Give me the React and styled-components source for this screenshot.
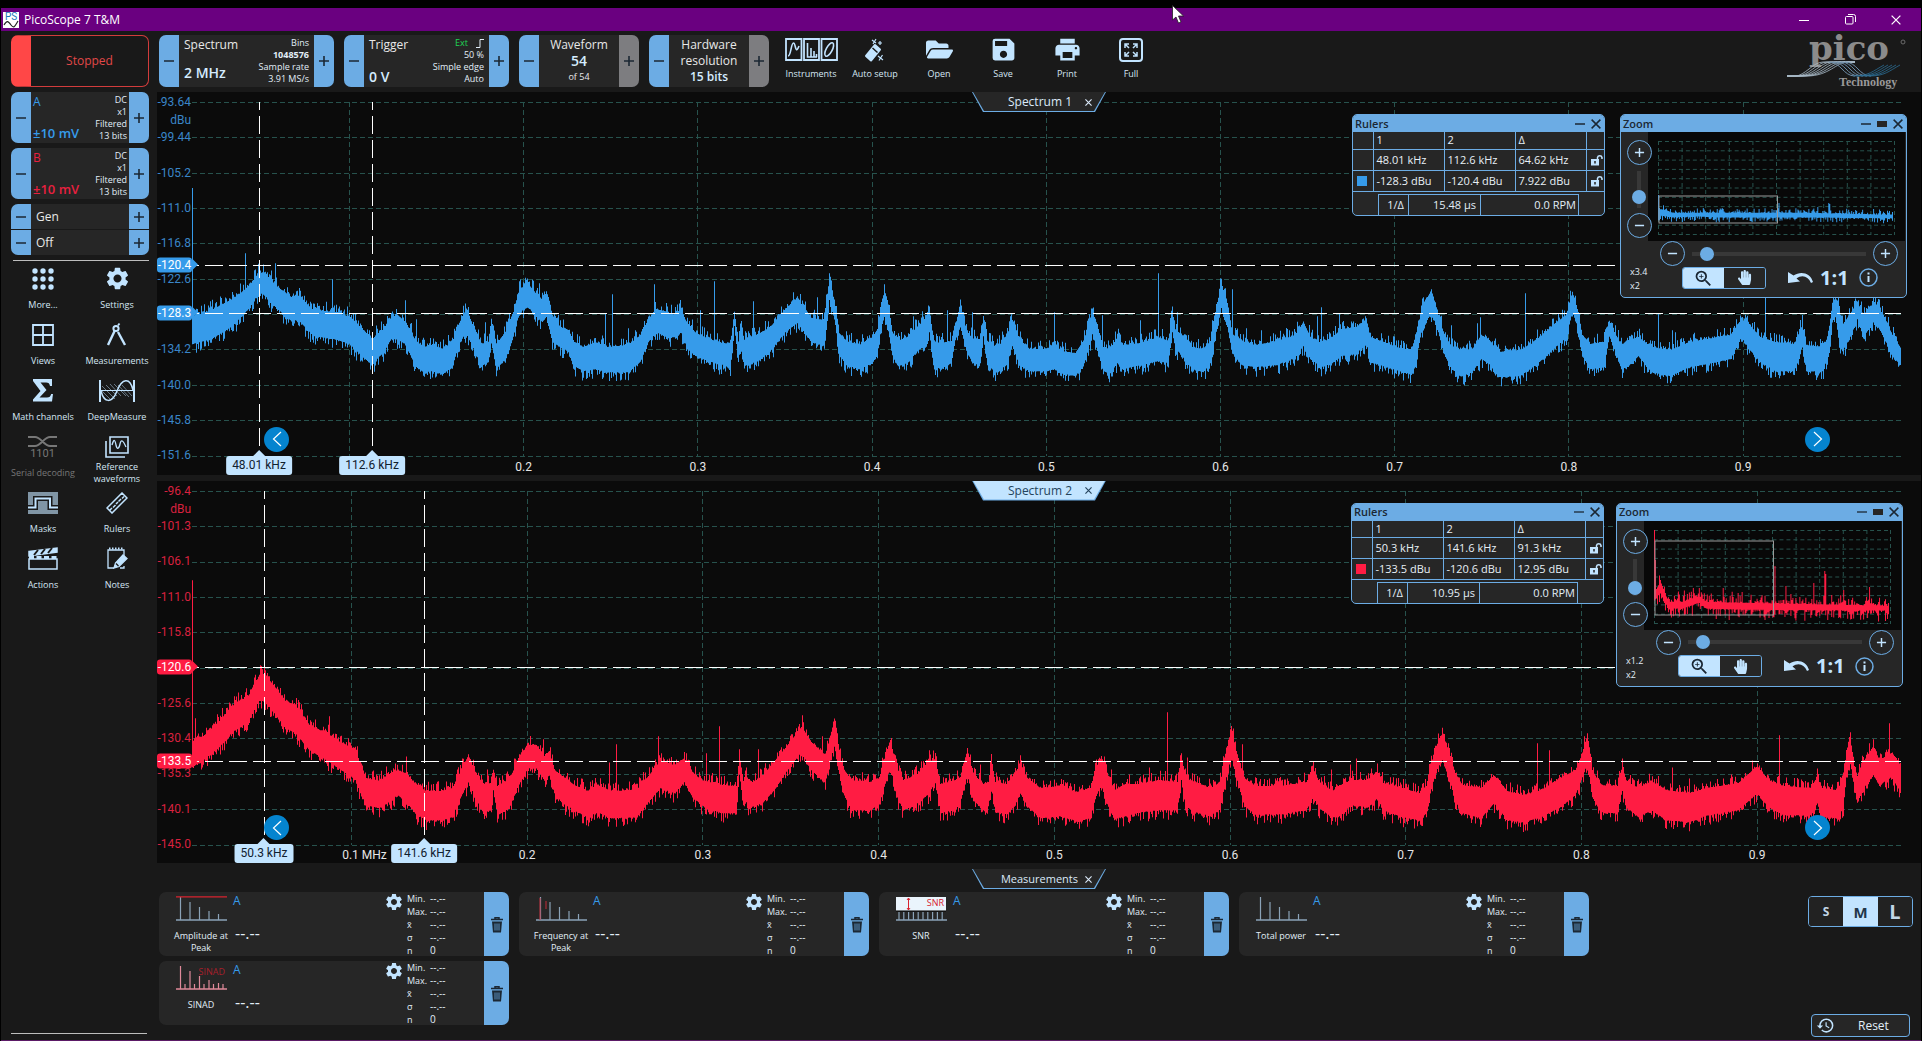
import React from "react";
import styled, { createGlobalStyle, css } from "styled-components";
import { MdSettings, MdHistory, MdZoomIn, MdPrint, MdSave } from "react-icons/md";
import { FaFolderOpen, FaHandPaper } from "react-icons/fa";

const C = {
  bg: "#191919",
  panel: "#262626",
  plot: "#0b0b0b",
  accent: "#6cace4",
  pale: "#c2e4ff",
  text: "#e2eef8",
  grid: "#27524d",
  blue: "#369bea",
  red: "#ff1c43",
  ink: "#1b2733",
};
const UI = `"Segoe UI", "Open Sans", "Noto Sans", sans-serif`;
const NUM = `Roboto, "Liberation Sans", sans-serif`;

const Global = createGlobalStyle`
  * { box-sizing: border-box; }
  body { margin: 0; background: #000; color: ${C.text}; font: 12px/16px ${UI}; }
  button { font: inherit; color: inherit; border: 0; padding: 0; background: none; cursor: pointer; }
  svg { display: block; }
`;

/* ---------- window frame ---------- */

const Window = styled.div`
  display: flex;
  flex-direction: column;
  min-height: 100vh;
  padding-top: 8px;
  border: 1px solid #000;
  border-width: 0 1px;
  box-shadow: inset 0 -1px 0 #5b1a66;
`;
const TitleBar = styled.header`
  display: flex;
  align-items: center;
  gap: 5px;
  height: 23px;
  padding: 0 2px;
  background: #6a0080;
  color: #fff;
  font-size: 12px;
`;
const Caption = styled.h1`
  margin: 0;
  flex: 1;
  font: inherit;
`;
const FrameButtons = styled.div`
  display: flex;
`;
const FrameButton = styled.button`
  display: grid;
  place-items: center;
  width: 46px;
  height: 20px;
`;
const Pointer = styled.svg`
  position: absolute;
  top: 5px;
  left: 61%;
  z-index: 10;
`;
const Body = styled.div`
  flex: 1;
  display: grid;
  grid-template-columns: 156px minmax(0, 1fr);
  margin-bottom: 1px;
  background: ${C.bg};
`;
const Main = styled.main`
  display: flex;
  flex-direction: column;
  min-width: 0;
`;

/* ---------- stepper controls ---------- */

const Stepper = styled.section`
  display: flex;
  flex: none;
  width: ${(p) => p.$w || "100%"};
  height: ${(p) => p.$h || 52}px;
  border-radius: 7px;
  overflow: hidden;
  background: ${C.panel};
`;
const StepButton = styled.button`
  flex: none;
  display: grid;
  place-items: center;
  width: 20px;
  background: ${(p) => (p.disabled ? "#7d7d80" : C.accent)};
  color: ${C.ink};
`;
const Pair = styled.div`
  flex: 1;
  display: flex;
  justify-content: space-between;
  padding: 0 ${(p) => p.$pad || 5}px;
  min-width: 0;
`;
const Lead = styled.div`
  display: flex;
  flex-direction: column;
  justify-content: space-between;
  padding: 2px 0 ${(p) => (p.$tight ? 6 : 2)}px;
  color: ${(p) => p.$color || "#e8e8e8"};
  font-size: 12px;
`;
const Value = styled.strong`
  font-size: ${(p) => p.$size || 13}px;
  font-weight: 600;
  color: ${(p) => p.$color || "#d5ecff"};
`;
const Details = styled.div`
  display: flex;
  flex-direction: column;
  justify-content: center;
  text-align: right;
  font-size: 9px;
  line-height: 12px;
  color: ${C.text};
`;
const Edge = styled.span`
  display: flex;
  justify-content: flex-end;
  align-items: center;
  gap: 8px;
  color: #1fd655;
`;
const Stack = styled.div`
  flex: 1;
  display: flex;
  flex-direction: column;
  align-items: center;
  justify-content: center;
  text-align: center;
  line-height: 16px;
  color: #e8e8e8;
`;
const Small = styled.span`
  font-size: 9px;
`;

function Sign({ plus, size = 12 }) {
  return (
    <svg width={size} height={size} viewBox="0 0 12 12" stroke="currentColor" strokeWidth="1.6" aria-hidden="true">
      <path d={plus ? "M1 6H11M6 1V11" : "M1 6H11"} />
    </svg>
  );
}

function Step({ name, w, h, plusOff, children }) {
  return (
    <Stepper $w={w} $h={h}>
      <StepButton aria-label={`${name} down`}><Sign /></StepButton>
      {children}
      <StepButton aria-label={`${name} up`} disabled={plusOff}><Sign plus /></StepButton>
    </Stepper>
  );
}

/* ---------- sidebar ---------- */

const Sidebar = styled.aside`
  display: flex;
  flex-direction: column;
  padding: 4px 0 6px;
`;
const Channels = styled.div`
  display: flex;
  flex-direction: column;
  gap: 5px;
  padding: 0 8px 0 10px;
`;
const RunButton = styled.button`
  height: 52px;
  border: 1px solid #d23c3c;
  border-left: 20px solid #ff4747;
  border-radius: 7px;
  color: #e14848;
  font-size: 12px;
  background: ${C.bg};
`;
const Generator = styled.div`
  display: flex;
  flex-direction: column;
  gap: 1px;
  border-radius: 7px;
  overflow: hidden;

  & > section { border-radius: 0; }
`;
const GenLabel = styled.span`
  flex: 1;
  padding-left: 5px;
  line-height: 25px;
  color: #e8e8e8;
`;
const Rule = styled.hr`
  width: 136px;
  margin: ${(p) => (p.$foot ? "auto 0 0 10px" : "5px 0 3px 12px")};
  border: 0;
  border-top: 1px solid #bdbdbd;
`;
const ToolGrid = styled.nav`
  display: grid;
  grid-template-columns: 74px 74px;
  grid-auto-rows: 56px;
  padding-left: 5px;
`;
const Tool = styled.button`
  display: flex;
  flex-direction: column;
  align-items: center;
  width: ${(p) => (p.$bar ? "64px" : "auto")};
  color: ${(p) => (p.disabled ? "#777" : C.pale)};
`;
const ToolIcon = styled.span`
  display: grid;
  place-items: center;
  height: 29px;
`;
const ToolLabel = styled.span`
  display: grid;
  place-items: center;
  height: ${(p) => (p.$bar ? 20 : 24)}px;
  font-size: 9px;
  line-height: 12px;
  color: ${(p) => (p.$off ? "#777" : "#d5e6f4")};
`;

function ToolItem({ label, icon, disabled, bar }) {
  return (
    <Tool disabled={disabled} $bar={bar}>
      <ToolIcon>{icon}</ToolIcon>
      <ToolLabel $off={disabled} $bar={bar}>{label}</ToolLabel>
    </Tool>
  );
}

const Line = (props) => <svg fill="none" stroke="currentColor" aria-hidden="true" {...props} />;

const DotsIcon = () => (
  <svg width="22" height="22" viewBox="0 0 22 22" fill="currentColor" aria-hidden="true">
    {[3, 11, 19].map((y) => [3, 11, 19].map((x) => <circle key={`${x}${y}`} cx={x} cy={y} r="2.7" />))}
  </svg>
);
const ViewsIcon = () => (
  <Line width="22" height="22" strokeWidth="1.8"><path d="M1 1H21V21H1ZM11 1V21M1 11H21" /></Line>
);
const CompassIcon = () => (
  <Line width="22" height="24" strokeWidth="2.4">
    <circle cx="10" cy="5.5" r="2.6" strokeWidth="2" />
    <path d="M12 2.5L13.5 .5" strokeWidth="1.8" />
    <path d="M8.6 8L2 22M12 9L19 22" />
  </Line>
);
const SigmaIcon = () => (
  <svg width="20" height="23" viewBox="0 0 20 23" fill="currentColor" aria-hidden="true">
    <path d="M0 0H19V7H17C16.600 4.500 15.500 3.500 13 3.500H7.500L13.500 11L6.500 18.500H14C16.500 18.500 17.500 17.500 18.200 15H20L19 22.500H0V20.500L7.500 12L0 2Z" />
  </svg>
);
const DeepIcon = () => (
  <Line width="36" height="24" strokeWidth="1.5">
    <path d="M1 1V23M35 1V23" strokeWidth="2" />
    <path d="M1 11.500H35" strokeWidth="1.200" />
    <path d="M2 12C5 24 13 25 18 12S31 -2 34 11" />
    <path d="M3 7L16 20M7 6L18 17M11 5L22 17M15 5L27 17M19 6L30 18M23 6L33 17M3 12L12 21" strokeWidth=".8" opacity=".6" />
  </Line>
);
const SerialIcon = () => (
  <svg width="30" height="26" aria-hidden="true">
    <path d="M0 3H7C13 3 16 12 22 12H29M0 12H7C13 12 16 3 22 3H29" fill="none" stroke="currentColor" strokeWidth="2" />
    <text x="14.500" y="23" textAnchor="middle" fontFamily={NUM} fontSize="11" fill="currentColor">1101</text>
  </svg>
);
const ReferenceIcon = () => (
  <Line width="24" height="22" strokeWidth="1.600">
    <path d="M5 1H23V17H5ZM1 5V21H20" />
    <path d="M7 9C9 2 10 4 11 9S14 13 15 8S18 4 21 11" strokeWidth="1.300" />
  </Line>
);
const MasksIcon = () => (
  <svg width="30" height="22" aria-hidden="true">
    <rect width="30" height="22" fill="#8095a5" />
    <path d="M0 15.500H7.500V6.500H22V15.500H30" fill="none" stroke="#191919" strokeWidth="5" />
    <path d="M0 15.500H7.500V6.500H22V15.500H30" fill="none" stroke={C.pale} strokeWidth="2" />
  </svg>
);
const RulerIcon = () => (
  <Line width="22" height="22" strokeWidth="1.500">
    <path d="M1 16L16 1L21 6L6 21ZM4 18L6 16M7 15.500L9.500 13M10 12L12 10M12.500 9.500L15 7M16 6.500L18 4.500" />
  </Line>
);
const ActionsIcon = () => (
  <Line width="30" height="23" strokeWidth="1.500">
    <path d="M1 12H29V22H1Z" />
    <path d="M1 4.500L29 1V5L1 9Z" fill="currentColor" />
    <path d="M6 8L10 3M13 7L17 2M20 6L24 1" stroke="#191919" strokeWidth="2" />
    <path d="M1 10.500H29" strokeWidth="3" strokeDasharray="5 2.500" />
  </Line>
);
const NotesIcon = () => (
  <Line width="22" height="24" strokeWidth="1.300">
    <path d="M18 11V3H2V21H8M18 19V21H14" />
    <path d="M3 1.500H18" strokeWidth="2" strokeDasharray="1.500 1.500" />
    <path d="M8 21L9.500 16L17 8L21 11.500L13 19.500Z" fill="currentColor" />
    <path d="M10 16.500L12.500 19" stroke="#191919" />
  </Line>
);

const TOOLS = [
  ["More...", <DotsIcon />],
  ["Settings", <MdSettings size={27} />],
  ["Views", <ViewsIcon />],
  ["Measurements", <CompassIcon />],
  ["Math channels", <SigmaIcon />],
  ["DeepMeasure", <DeepIcon />],
  ["Serial decoding", <SerialIcon />, true],
  ["Reference waveforms", <ReferenceIcon />],
  ["Masks", <MasksIcon />],
  ["Rulers", <RulerIcon />],
  ["Actions", <ActionsIcon />],
  ["Notes", <NotesIcon />],
];

function Channel({ id, color }) {
  return (
    <Step name={`Channel ${id} range`} h={51}>
      <Pair $pad={2}>
        <Lead $color={color}>
          <span>{id}</span>
          <Value $color={color}>±10 mV</Value>
        </Lead>
        <Details><span>DC</span><span>x1</span><span>Filtered</span><span>13 bits</span></Details>
      </Pair>
    </Step>
  );
}

/* ---------- toolbar ---------- */

const Toolbar = styled.div`
  display: flex;
  gap: 10px;
  height: 61px;
  padding: 4px 14px 0 2px;
`;
const ToolRow = styled.div`
  display: flex;
`;
const LogoBox = styled.svg`
  margin-left: auto;
  overflow: visible;
`;

const InstrumentsIcon = () => (
  <Line width="53" height="23" strokeWidth="1.800">
    <path d="M1 1H16.500V22H1ZM19 1H34V22H19ZM36.500 1H52V22H36.500Z" />
    <path d="M3 18C6 18 6 5 8.500 5S10 18 14 8" strokeWidth="1.600" />
    <path d="M22.500 5V19H32M26 10V19M29 13V19M31.500 16V19" strokeWidth="1.600" />
    <ellipse cx="44.200" cy="11.500" rx="3" ry="7.500" transform="rotate(28 44.200 11.500)" strokeWidth="1.600" />
  </Line>
);
const WandIcon = () => (
  <svg width="22" height="24" viewBox="0 0 22 24" aria-hidden="true">
    <path d="M2 18L11 7L16 11.500L7 22.500Z" fill="currentColor" stroke="currentColor" strokeWidth="2" strokeLinejoin="round" />
    <path d="M8.500 10L13.500 14.500" stroke="#191919" strokeWidth="1.500" />
    <path d="M8 2L12 5M12 1L9 6M16 3V7M14 5H18M14 18L19 22M18.500 17L15 22.500" stroke="currentColor" strokeWidth="1.200" />
  </svg>
);
const FullIcon = () => (
  <Line width="24" height="24" strokeWidth="2">
    <rect x="1" y="1" width="22" height="22" rx="3" />
    <path d="M6 10V6H10M14 6H18V10M18 14V18H14M10 18H6V14M6 6L10 10M18 6L14 10M18 18L14 14M6 18L10 14" strokeWidth="1.500" />
  </Line>
);

function Logo() {
  return (
    <LogoBox width="120" height="56" role="img" aria-label="pico Technology">
      <text x="62" y="25" textAnchor="middle" fontFamily={`"DejaVu Serif", serif`} fontSize="34" fontWeight="700" fill="#8b8b8b">pico</text>
      <circle cx="116" cy="7" r="2" fill="none" stroke="#6a6a6a" />
      <g fill="none" strokeWidth="1">
        {[0, 4, 8, 12, 16, 20, 24].map((d) => (
          <path key={`a${d}`} d={`M0 41H${8 + d / 2}C${18 + d} 41 ${26 + d} 27 ${36 + d} 27H68`} stroke="#a9bac8" opacity=".8" />
        ))}
        {[0, 4, 8, 12, 16].map((d) => (
          <path key={`b${d}`} d={`M${42 + d} 27C${54 + d} 27 ${56 + d} 41 ${68 + d} 41`} stroke="#6e8ca6" />
        ))}
        {[0, 4, 8, 12, 16].map((d) => (
          <path key={`c${d}`} d={`M${66 + d} 41C${82 + d} 41 ${86 + d} 36 ${97 + d} 30`} stroke="#2b6d94" opacity=".8" />
        ))}
      </g>
      <text x="52" y="51" fontFamily={`"Liberation Serif", serif`} fontWeight="700" fontSize="12" fill="#9a9a9a">Technology</text>
    </LogoBox>
  );
}

/* ---------- spectrum data: [x, upper edge, lower edge] of the noise band ---------- */

const BAND_A = [
  [0, 213, 243], [19, 206, 238], [40, 195, 225], [56, 183, 208], [67, 168, 191], [74, 171, 196], [85, 183, 208],
  [99, 193, 220], [105, 191, 218], [121, 206, 235], [142, 208, 238], [158, 213, 243], [170, 225, 256], [180, 235, 263],
  [191, 225, 251], [199, 213, 238], [205, 211, 238], [213, 218, 243], [223, 236, 265], [231, 243, 271], [240, 241, 270],
  [250, 245, 273], [260, 238, 266], [266, 221, 245], [274, 205, 230], [280, 220, 245], [289, 240, 265], [296, 238, 261],
  [299, 216, 241], [304, 240, 268], [313, 228, 258], [321, 208, 235], [327, 185, 211], [336, 180, 206], [344, 190, 216],
  [350, 196, 221], [354, 191, 216], [360, 211, 241], [368, 223, 246], [376, 226, 250], [382, 238, 265], [391, 243, 270],
  [403, 238, 268], [415, 243, 271], [436, 241, 271], [448, 231, 260], [456, 215, 241], [464, 205, 231], [474, 208, 236],
  [482, 211, 236], [489, 205, 231], [495, 221, 248], [505, 230, 256], [525, 238, 263], [538, 240, 265], [542, 208, 225],
  [546, 238, 260], [548, 220, 245], [552, 236, 265], [566, 230, 260], [578, 223, 250], [593, 205, 231], [605, 194, 222],
  [611, 203, 230], [619, 214, 241], [632, 216, 245], [637, 174, 199], [643, 203, 222], [646, 228, 252], [654, 237, 264],
  [667, 241, 268], [680, 233, 262], [685, 226, 254], [689, 199, 226], [692, 189, 216], [696, 201, 230], [700, 228, 254],
  [706, 237, 265], [715, 233, 262], [726, 222, 249], [733, 214, 245], [737, 203, 231], [741, 237, 264], [748, 239, 268],
  [759, 237, 262], [763, 222, 239], [768, 199, 226], [774, 226, 249], [780, 235, 262], [788, 235, 262], [791, 212, 235],
  [795, 237, 264], [805, 244, 272], [815, 230, 262], [820, 216, 245], [827, 235, 264], [837, 245, 270], [855, 245, 270],
  [862, 239, 268], [868, 247, 272], [883, 249, 275], [892, 235, 262], [900, 207, 233], [905, 222, 249], [911, 243, 270],
  [918, 245, 272], [925, 233, 262], [931, 241, 268], [948, 239, 264], [966, 233, 260], [976, 237, 262], [980, 207, 231],
  [983, 226, 247], [989, 230, 254], [1000, 243, 268], [1011, 245, 271], [1018, 237, 262], [1024, 203, 230],
  [1029, 180, 207], [1035, 199, 226], [1040, 230, 252], [1050, 237, 264], [1063, 241, 266], [1085, 237, 264],
  [1103, 231, 256], [1111, 218, 245], [1118, 233, 258], [1129, 239, 266], [1140, 233, 262], [1149, 225, 255],
  [1164, 223, 253], [1174, 215, 241], [1178, 233, 261], [1191, 238, 265], [1210, 245, 271], [1219, 245, 273],
  [1224, 231, 258], [1229, 205, 231], [1239, 186, 211], [1246, 211, 231], [1251, 228, 251], [1259, 243, 268],
  [1270, 246, 275], [1280, 245, 271], [1289, 231, 258], [1297, 236, 263], [1306, 248, 276], [1327, 246, 275],
  [1338, 241, 268], [1353, 228, 256], [1364, 218, 245], [1374, 211, 236], [1380, 188, 211], [1385, 205, 225],
  [1390, 231, 255], [1398, 240, 268], [1412, 238, 266], [1417, 218, 235], [1422, 228, 248], [1429, 241, 268],
  [1436, 236, 265], [1446, 233, 255], [1459, 243, 271], [1478, 246, 275], [1497, 238, 266], [1515, 235, 263],
  [1538, 231, 258], [1549, 215, 236], [1557, 221, 248], [1568, 233, 261], [1583, 238, 270], [1602, 240, 270],
  [1607, 228, 255], [1610, 221, 245], [1614, 241, 270], [1631, 243, 270], [1636, 231, 251], [1640, 201, 221],
  [1643, 193, 215], [1646, 201, 235], [1650, 221, 250], [1657, 211, 238], [1665, 198, 218], [1671, 211, 236],
  [1682, 198, 220], [1691, 211, 235], [1700, 231, 255], [1709, 245, 265],
];
const SPIKES_A = [
  [0, 86], [18, 199], [53, 151], [83, 161], [140, 177], [213, 198], [224, 217], [293, 220], [347, 181], [413, 211],
  [420, 192], [436, 226], [462, 182], [508, 208], [522, 179], [561, 199], [625, 195], [721, 214], [730, 209], [755, 208],
  [780, 210], [862, 210], [910, 213], [948, 218], [966, 171], [985, 210], [1040, 187], [1054, 226], [1069, 228],
  [1125, 214], [1129, 205], [1147, 211], [1259, 223], [1285, 221], [1288, 215], [1333, 191], [1423, 223], [1466, 211],
  [1480, 228], [1483, 230], [1573, 188],
];
const BAND_B = [
  [0, 250, 277], [11, 243, 270], [27, 228, 257], [40, 213, 242], [56, 203, 232], [62, 193, 220], [67, 182, 210],
  [73, 182, 212], [85, 197, 227], [93, 208, 238], [103, 212, 243], [117, 232, 260], [134, 240, 270], [146, 248, 278],
  [164, 257, 290], [168, 273, 303], [174, 285, 315], [187, 288, 318], [195, 282, 313], [205, 277, 305], [213, 280, 310],
  [225, 293, 325], [234, 298, 330], [248, 298, 330], [260, 295, 327], [266, 283, 312], [276, 262, 292], [282, 277, 305],
  [291, 292, 323], [298, 292, 320], [301, 277, 300], [305, 293, 325], [317, 287, 318], [327, 263, 292], [336, 252, 278],
  [344, 252, 278], [352, 263, 290], [357, 258, 285], [362, 277, 303], [370, 283, 313], [382, 292, 320], [395, 298, 327],
  [405, 292, 322], [419, 298, 328], [444, 297, 327], [456, 283, 312], [468, 268, 298], [482, 272, 303], [492, 265, 292],
  [499, 278, 305], [509, 287, 315], [529, 292, 323], [544, 293, 323], [547, 263, 283], [551, 288, 315], [554, 280, 312],
  [556, 292, 318], [570, 283, 313], [582, 268, 300], [593, 255, 283], [609, 234, 262], [619, 249, 280], [633, 262, 293],
  [637, 247, 274], [642, 226, 255], [646, 251, 278], [650, 274, 301], [659, 287, 320], [678, 289, 320], [687, 285, 314],
  [693, 262, 293], [698, 247, 276], [704, 274, 305], [711, 287, 320], [724, 282, 314], [737, 268, 303], [743, 266, 291],
  [748, 291, 322], [763, 287, 320], [768, 284, 312], [775, 257, 285], [781, 282, 310], [791, 291, 320], [796, 289, 316],
  [799, 268, 297], [803, 289, 322], [815, 291, 324], [822, 280, 316], [828, 272, 303], [835, 285, 316], [848, 295, 328],
  [867, 293, 326], [885, 299, 331], [898, 295, 328], [904, 274, 305], [909, 264, 295], [914, 278, 312], [922, 297, 329],
  [933, 291, 326], [948, 291, 322], [966, 287, 320], [985, 289, 320], [989, 262, 289], [993, 285, 316], [1003, 289, 322],
  [1018, 295, 326], [1028, 289, 318], [1033, 262, 291], [1039, 236, 266], [1044, 259, 287], [1052, 285, 316],
  [1063, 293, 324], [1088, 293, 324], [1114, 289, 320], [1121, 276, 307], [1127, 289, 318], [1140, 298, 327],
  [1146, 293, 327], [1159, 287, 315], [1176, 287, 317], [1185, 278, 308], [1191, 290, 320], [1210, 295, 327],
  [1227, 300, 330], [1234, 293, 323], [1238, 273, 303], [1244, 253, 280], [1250, 240, 270], [1257, 260, 287],
  [1263, 280, 310], [1270, 292, 323], [1289, 295, 328], [1297, 287, 318], [1302, 283, 313], [1315, 298, 330],
  [1331, 302, 332], [1349, 297, 327], [1368, 285, 317], [1383, 277, 305], [1389, 263, 290], [1395, 242, 273],
  [1400, 277, 307], [1408, 292, 322], [1425, 293, 323], [1430, 273, 300], [1434, 288, 317], [1446, 295, 327],
  [1459, 288, 320], [1474, 297, 330], [1497, 300, 332], [1515, 295, 325], [1546, 290, 320], [1557, 280, 310],
  [1565, 273, 303], [1576, 287, 317], [1591, 293, 325], [1619, 295, 325], [1625, 283, 313], [1629, 295, 327],
  [1644, 297, 328], [1651, 287, 317], [1654, 257, 287], [1658, 247, 273], [1662, 273, 297], [1665, 283, 312],
  [1672, 267, 297], [1681, 253, 285], [1687, 267, 295], [1699, 260, 287], [1704, 265, 295], [1709, 280, 303],
];
const SPIKES_B = [
  [0, 89], [3, 227], [42, 205], [54, 197], [68, 174], [137, 225], [214, 265], [295, 278], [351, 248], [417, 271],
  [424, 253], [466, 245], [514, 262], [527, 235], [566, 258], [610, 224], [630, 245], [737, 259], [788, 273],
  [919, 278], [957, 276], [975, 221], [995, 266], [1050, 253], [1139, 278], [1158, 273], [1164, 267], [1345, 252],
  [1357, 259], [1430, 267], [1480, 276], [1497, 287], [1587, 244], [1625, 277], [1681, 248], [1697, 232],
];

function noise(seed) {
  let s = seed;
  return () => {
    s = (s * 1664525 + 1013904223) % 4294967296;
    return s / 4294967296;
  };
}

function tracePath(band, spikes, jitter, seed) {
  const rand = noise(seed);
  const tall = new Map(spikes);
  const end = band[band.length - 1][0];
  const top = [];
  const low = [];
  let k = 0;
  for (let x = 0; x < end; x++) {
    while (band[k + 1][0] <= x) k++;
    const [x0, t0, b0] = band[k];
    const [x1, t1, b1] = band[k + 1];
    const f = (x - x0) / (x1 - x0);
    const t = t0 + (t1 - t0) * f - rand() ** 3 * jitter + jitter / 6;
    top.push(tall.has(x) ? tall.get(x) : t);
    low.push(b0 + (b1 - b0) * f + rand() ** 3 * jitter - jitter / 8);
  }
  const up = top.map((y, x) => `V${y.toFixed(1)}H${x + 1}`).join("");
  const down = low.map((y, x) => `V${y.toFixed(1)}H${x}`).reverse().join("");
  return `M0 ${low[0].toFixed(1)}${up}${down}Z`;
}

/* ---------- plot ---------- */

const PLOT_W = 1709;
const PLOT_H = 353;

const Plots = styled.div`
  flex: 1;
  display: flex;
  flex-direction: column;
  gap: 6px;
`;
const PlotFrame = styled.section`
  position: relative;
  flex: 1;
  display: grid;
  grid-template-columns: 35px minmax(0, 1fr) 20px;
  grid-template-rows: 10px minmax(320px, 1fr) 19px;
  background: ${C.plot};
  font: 12px/18px ${NUM};
`;
const YAxis = styled.div`
  grid-area: 2 / 1;
  display: flex;
  flex-direction: column;
  text-align: right;
  color: ${(p) => p.$color};
`;
const YTick = styled.div`
  flex: ${(p) => (p.$last ? "0 0 0" : "1 1 0")};
  min-height: 0;
  height: 0;
  margin: 0 1px 0 -4px;

  & > span { display: block; transform: translateY(-9px); }
`;
const Canvas = styled.div`
  position: relative;
  grid-area: 2 / 2;
`;
const Trace = styled.svg`
  position: absolute;
  inset: 0;
  width: 100%;
  height: 100%;
  overflow: visible;
`;
const XAxis = styled.div`
  position: relative;
  grid-area: 3 / 2;
  color: #e6e6e6;
`;
const XTick = styled.span`
  position: absolute;
  top: 2px;
  white-space: nowrap;
  transform: translateX(-50%);
`;
const XFlag = styled.span`
  position: absolute;
  top: 0;
  padding: 0 6px;
  border-radius: 3px;
  background: ${C.pale};
  color: #10202e;
  line-height: 19px;
  white-space: nowrap;
  transform: translateX(-50%);

  &::before {
    content: "";
    position: absolute;
    left: calc(50% - 6px);
    bottom: 100%;
    border: 6px solid transparent;
    border-top-width: 0;
    border-bottom-color: ${C.pale};
  }
`;
const YFlag = styled.span`
  position: absolute;
  right: 100%;
  width: 35px;
  border-radius: 3px;
  background: ${(p) => p.$color};
  color: #fff;
  line-height: 15px;
  text-align: center;
  transform: translateY(-50%);

  &::before {
    content: "";
    position: absolute;
    left: 100%;
    top: 1px;
    border: 6px solid transparent;
    border-right-width: 0;
    border-left-color: ${(p) => p.$color};
  }
`;
const PanButton = styled.button`
  position: absolute;
  bottom: 23px;
  ${(p) => (p.$side === "left" ? css`left: 107px;` : css`right: 91px;`)}
  display: grid;
  place-items: center;
  width: 25px;
  height: 25px;
  border-radius: 50%;
  background: #0584cf;
  color: #fff;
`;

const TabShape = styled.div`
  position: ${(p) => (p.$flow ? "relative" : "absolute")};
  ${(p) => !p.$flow && css`top: 0; left: calc(50% - 67px);`}
  isolation: isolate;
  display: flex;
  align-items: center;
  gap: ${(p) => (p.$flow ? 4 : 10)}px;
  width: 134px;
  height: 20px;
  padding: 0 12px;
  clip-path: polygon(0 0, 100% 0, calc(100% - 11px) 100%, 11px 100%);
  background: ${C.accent};
  color: ${(p) => (p.$active ? "#24435c" : "#dbeafa")};
  font: ${(p) => (p.$flow ? 11 : 12)}px/20px ${UI};

  &::before {
    content: "";
    position: absolute;
    z-index: -1;
    inset: 0 1px 1px;
    clip-path: polygon(0 0, 100% 0, calc(100% - 11px) 100%, 11px 100%);
    background: ${(p) => (p.$active ? C.pale : C.panel)};
  }
`;
const TabName = styled.span`
  flex: 1;
  text-align: right;
  white-space: nowrap;
`;
const CloseButton = styled.button`
  display: grid;
  place-items: center;
  width: 12px;
  height: 12px;
`;

const Cross = ({ size = 7, width = 1.3 }) => (
  <Line width={size} height={size} viewBox="0 0 8 8" strokeWidth={width}><path d="M.5 .5L7.500 7.500M7.500 .5L.5 7.500" /></Line>
);

function Tab({ name, active, flow }) {
  return (
    <TabShape $active={active} $flow={flow}>
      <TabName>{name}</TabName>
      <CloseButton aria-label={`Close ${name}`}><Cross /></CloseButton>
    </TabShape>
  );
}

/* ---------- floating panels ---------- */

const Panel = styled.section`
  position: absolute;
  top: ${(p) => p.$top}px;
  right: ${(p) => p.$right}px;
  width: ${(p) => p.$w}px;
  border: 1px solid ${C.accent};
  border-radius: 5px;
  overflow: hidden;
  background: ${C.panel};
  color: ${C.text};
  font: 12px/16px ${UI};
`;
const PanelHead = styled.header`
  display: flex;
  align-items: center;
  gap: 6px;
  height: 17px;
  padding: 0 3px 0 2px;
  background: ${C.accent};
  color: ${C.ink};
`;
const PanelTitle = styled.h2`
  flex: 1;
  margin: 0;
  font: 600 11px/16px ${UI};
`;
const RulerTable = styled.table`
  width: 100%;
  border-collapse: collapse;
  table-layout: fixed;
  font-size: 11px;
  color: #e8f0f6;

  th, td { height: 21px; padding: 0 3px; font-weight: 400; text-align: left; border: 1px solid ${C.accent}; white-space: nowrap; }
  tr:first-child > * { border-top: 0; }
  tr > *:first-child { border-left: 0; }
  tr > *:last-child { border-right: 0; }
  thead th, thead td { height: 17px; }
`;
const Swatch = styled.span`
  display: block;
  width: 10px;
  height: 10px;
  margin-left: 1px;
  background: ${(p) => p.$color};
`;
const LockButton = styled.button`
  display: block;
  color: ${C.pale};
`;
const Inverse = styled.dl`
  display: grid;
  grid-template-columns: 29px 72px 100px;
  margin: 2px 25px 0;
  border: 1px solid ${C.accent};
  border-bottom: 0;
  font-size: 11px;
  line-height: 20px;
  text-align: right;

  & > * { margin: 0; padding: 0 4px; }
  & > * + * { border-left: 1px solid ${C.accent}; }
`;

const LockIcon = () => (
  <svg width="13" height="12" viewBox="0 0 13 12" aria-hidden="true">
    <path d="M1 5H9V11.500H1Z" fill="currentColor" />
    <path d="M7.500 5V3.500A2.300 2.300 0 0 1 12 3.500V5" fill="none" stroke="currentColor" strokeWidth="1.500" />
    <path d="M5 7V9.500" stroke="#222" strokeWidth="1.500" />
  </svg>
);
const DashIcon = () => <Line width="10" height="10" strokeWidth="1.300"><path d="M0 5H10" /></Line>;
const MaxIcon = () => <svg width="10" height="6" aria-hidden="true"><rect width="10" height="6" fill="#262626" /></svg>;

function RulersPanel({ top, right, color, freq, level, inverse }) {
  return (
    <Panel $top={top} $right={right} $w={253}>
      <PanelHead>
        <PanelTitle>Rulers</PanelTitle>
        <button aria-label="Minimise rulers"><DashIcon /></button>
        <button aria-label="Close rulers"><Cross size={10} width={1.2} /></button>
      </PanelHead>
      <RulerTable>
        <colgroup><col width="20" /><col width="71" /><col width="71" /><col width="71" /><col width="18" /></colgroup>
        <thead>
          <tr><td /><th scope="col">1</th><th scope="col">2</th><th scope="col">Δ</th><td /></tr>
        </thead>
        <tbody>
          <tr>
            <td />
            {freq.map((v) => <td key={v}>{v}</td>)}
            <td><LockButton aria-label="Lock frequency rulers"><LockIcon /></LockButton></td>
          </tr>
          <tr>
            <td><Swatch $color={color} /></td>
            {level.map((v) => <td key={v}>{v}</td>)}
            <td><LockButton aria-label="Lock level rulers"><LockIcon /></LockButton></td>
          </tr>
        </tbody>
      </RulerTable>
      <Inverse><dt>1/Δ</dt><dd>{inverse}</dd><dd>0.0 RPM</dd></Inverse>
    </Panel>
  );
}

const ZoomTop = styled.div`
  display: grid;
  grid-template-columns: 27px 1fr 1px;
  grid-template-rows: 109px;
`;
const ZoomSide = styled.div`
  display: flex;
  flex-direction: column;
  align-items: center;
  justify-content: space-between;
  padding: 8px 0 3px 9px;
`;
const RoundButton = styled.button`
  flex: none;
  display: grid;
  place-items: center;
  width: 25px;
  height: 25px;
  border: 1px solid ${C.accent};
  border-radius: 50%;
  background: ${C.panel};
  color: ${C.pale};
  position: relative;
`;
const Overview = styled.div`
  padding: 9px 10px 6px;
  background: #080808;
`;
const thumb = css`
  appearance: none;
  width: 14px;
  height: 14px;
  border: 0;
  border-radius: 50%;
  background: ${C.accent};
`;
const Slider = styled.input`
  appearance: none;
  margin: 0;
  background: #383838;
  ${(p) =>
    p.$vertical
      ? css`width: 4px; height: 37px; writing-mode: vertical-lr; direction: rtl;`
      : css`flex: 1; min-width: 0; height: 4px;`}

  &::-webkit-slider-thumb { ${thumb} }
  &::-moz-range-thumb { ${thumb} }
`;
const ZoomRow = styled.div`
  display: flex;
  align-items: center;
  gap: 7px;
  padding: 0 8px 0 39px;
`;
const ZoomFoot = styled.div`
  display: flex;
  align-items: center;
  height: 31px;
  padding: 0 28px 8px 9px;
`;
const Factors = styled.div`
  width: 52px;
  font-size: 9px;
  line-height: 14px;
  padding-top: 3px;
`;
const ModeGroup = styled.div`
  display: flex;
  margin-right: 22px;
  border: 1px solid ${C.accent};
  border-radius: 3px;
  overflow: hidden;
`;
const ModeButton = styled.button`
  display: grid;
  place-items: center;
  width: 41px;
  height: 20px;
  background: ${(p) => (p["aria-pressed"] ? C.pale : C.panel)};
  color: ${(p) => (p["aria-pressed"] ? C.ink : C.pale)};
`;
const FitButton = styled.button`
  margin: 0 auto 0 7px;
  color: ${C.pale};
  font-size: 20px;
  font-weight: 700;
`;
const IconButton = styled.button`
  color: ${C.pale};
`;

const UndoIcon = () => (
  <svg width="25" height="16" viewBox="0 0 25 16" aria-hidden="true">
    <path d="M0 2V13L12 11.500L8.500 8.500C14 4.500 20 6 23 13L25 12C22.500 3 13 .5 5.500 5.500Z" fill="currentColor" />
  </svg>
);
const InfoIcon = () => (
  <svg width="19" height="19" viewBox="0 0 19 19" aria-hidden="true">
    <circle cx="9.500" cy="9.500" r="8.500" fill="none" stroke={C.accent} strokeWidth="1.500" />
    <path d="M9.500 4.500V6.500M9.500 8V14" stroke="currentColor" strokeWidth="2" />
  </svg>
);

function ZoomPanel({ top, right, factor, box, path, color, level }) {
  const cols = Array.from({ length: 11 }, (_, i) => i * 23.7);
  const rows = Array.from({ length: 11 }, (_, i) => i * 9.3);
  return (
    <Panel $top={top} $right={right} $w={287}>
      <PanelHead>
        <PanelTitle>Zoom</PanelTitle>
        <button aria-label="Minimise zoom"><DashIcon /></button>
        <button aria-label="Restore zoom"><MaxIcon /></button>
        <button aria-label="Close zoom"><Cross size={10} width={1.2} /></button>
      </PanelHead>
      <ZoomTop>
        <ZoomSide>
          <RoundButton aria-label="Vertical zoom in"><Sign plus size={11} /></RoundButton>
          <Slider $vertical type="range" aria-label="Vertical zoom" defaultValue={level} />
          <RoundButton aria-label="Vertical zoom out"><Sign size={11} /></RoundButton>
        </ZoomSide>
        <Overview>
          <svg width="100%" height="94" viewBox="0 0 238 94" preserveAspectRatio="none" aria-hidden="true">
            <g stroke={C.grid} strokeDasharray="4 3" shapeRendering="crispEdges">
              {cols.map((x) => <path key={x} d={`M${x + 0.5} 0V94`} />)}
              {rows.map((y) => <path key={y} d={`M0 ${y + 0.5}H238`} />)}
            </g>
            <path d={path} fill={color} />
            <rect x="1" y={box[0]} width="119" height={box[1]} fill="none" stroke="#9a9a9a" />
          </svg>
        </Overview>
      </ZoomTop>
      <ZoomRow>
        <RoundButton aria-label="Horizontal zoom out"><Sign size={11} /></RoundButton>
        <Slider type="range" aria-label="Horizontal zoom" defaultValue={5} />
        <RoundButton aria-label="Horizontal zoom in"><Sign plus size={11} /></RoundButton>
      </ZoomRow>
      <ZoomFoot>
        <Factors><div>{factor}</div><div>x2</div></Factors>
        <ModeGroup>
          <ModeButton aria-pressed={true} aria-label="Zoom to area"><MdZoomIn size={21} /></ModeButton>
          <ModeButton aria-pressed={false} aria-label="Pan"><FaHandPaper size={15} /></ModeButton>
        </ModeGroup>
        <IconButton aria-label="Undo zoom"><UndoIcon /></IconButton>
        <FitButton>1:1</FitButton>
        <IconButton aria-label="Zoom help"><InfoIcon /></IconButton>
      </ZoomFoot>
    </Panel>
  );
}

const MINI_A = tracePath(
  [[0, 67, 76], [5, 68, 75], [15, 71, 77], [40, 71, 76], [60, 71, 77], [120, 71, 77], [150, 71, 77], [236, 73, 78]],
  [[0, 54], [45, 67], [121, 62], [160, 66], [171, 62], [172, 63], [216, 68]], 5, 7,
);
const MINI_B = tracePath(
  [[0, 62, 72], [6, 49, 64], [14, 70, 80], [28, 70, 80], [45, 64, 74], [52, 70, 80], [90, 71, 81], [236, 74, 82]],
  [[0, 0], [1, 30], [45, 58], [69, 58], [88, 62], [121, 36], [132, 56], [160, 53], [171, 41], [172, 44], [190, 60], [216, 57]], 11, 9,
);

/* ---------- spectrum view ---------- */

function Spectrum({ name, active, color, axisColor, ticks, hRulers, vRulers, x0, pitch, firstLabel, path, children }) {
  const pct = (v, full) => `${(v / full) * 100}%`;
  const columns = Array.from({ length: 9 }, (_, i) => x0 + i * pitch);
  return (
    <PlotFrame aria-label={name}>
      <YAxis $color={axisColor}>
        {ticks.map((t, i) => (
          <YTick key={i} $last={i === 10}><span>{t}{i === 0 && <><br />dBu</>}</span></YTick>
        ))}
      </YAxis>
      <Canvas>
        <Trace viewBox={`0 0 ${PLOT_W} ${PLOT_H}`} preserveAspectRatio="none" aria-hidden="true">
          <g stroke={C.grid} strokeDasharray="5 3" shapeRendering="crispEdges">
            {ticks.map((_, i) => <path key={i} d={`M0 ${i * 35.3 + 0.5}H${PLOT_W}`} />)}
            {columns.map((x) => <path key={x} d={`M${x} 0V${PLOT_H}`} />)}
          </g>
          <path d={path} fill={color} />
          <g stroke="#fff" strokeDasharray="18 6" shapeRendering="crispEdges">
            {hRulers.map(([y]) => <path key={y} d={`M0 ${y + 0.5}H${PLOT_W}`} strokeDashoffset="-13" />)}
            {vRulers.map(([x]) => <path key={x} d={`M${x + 0.5} 0V${PLOT_H}`} strokeDashoffset="10" />)}
          </g>
        </Trace>
        {hRulers.map(([y, label]) => (
          <YFlag key={label} $color={color} style={{ top: pct(y, PLOT_H) }}>{label}</YFlag>
        ))}
      </Canvas>
      <XAxis>
        {columns.map((x, i) =>
          i > 0 ? (
            <XTick key={x} style={{ left: pct(x, PLOT_W) }}>{`0.${i + 1}`}</XTick>
          ) : (
            firstLabel && <XTick key={x} style={{ left: pct(x + 13, PLOT_W) }}>0.1 MHz</XTick>
          ),
        )}
        {vRulers.map(([x, label]) => (
          <XFlag key={label} style={{ left: pct(x, PLOT_W) }}>{label}</XFlag>
        ))}
      </XAxis>
      <PanButton $side="left" aria-label="Scroll left">
        <Line width="10" height="16" strokeWidth="1.2"><path d="M9 1L1.500 8L9 15" /></Line>
      </PanButton>
      <PanButton $side="right" aria-label="Scroll right">
        <Line width="10" height="16" strokeWidth="1.2"><path d="M1 1L8.500 8L1 15" /></Line>
      </PanButton>
      <Tab name={name} active={active} />
      {children}
    </PlotFrame>
  );
}

/* ---------- measurements ---------- */

const Measurements = styled.section`
  display: grid;
  grid-template-columns: minmax(0, 1fr) 120px;
  grid-template-rows: 20px 1fr;
  row-gap: 3px;
  min-height: 177px;
  padding-top: 6px;
`;
const TabSlot = styled.div`
  grid-column: 1 / -1;
  justify-self: center;
`;
const Cards = styled.div`
  display: flex;
  flex-wrap: wrap;
  align-content: flex-start;
  gap: 5px 10px;
  padding-left: 2px;
`;
const Card = styled.article`
  display: grid;
  grid-template-columns: 74px 1fr 20px 80px 25px;
  width: 350px;
  height: 64px;
  border-radius: 7px;
  overflow: hidden;
  background: ${C.panel};
`;
const CardName = styled.div`
  display: flex;
  flex-direction: column;
  align-items: center;
  padding: 4px 0 0 10px;
  font-size: 9px;
  line-height: 12px;
  text-align: center;
`;
const CardLabel = styled.h3`
  margin: 8px 0 0;
  width: 58px;
  font: inherit;
`;
const Reading = styled.div`
  display: flex;
  flex-direction: column;
  gap: 16px;
  padding-top: 1px;
  font-size: 12px;
`;
const Source = styled.span`
  color: ${C.blue};
`;
const Output = styled.output`
  padding-left: 2px;
  font-size: 16px;
`;
const GearButton = styled.button`
  display: flex;
  color: ${C.pale};
`;
const Stats = styled.dl`
  display: grid;
  grid-template-columns: 23px 1fr;
  align-content: start;
  margin: 0;
  padding: 0 0 0 3px;
  font-size: 9px;
  line-height: 13px;

  dd { margin: 0; font-size: 10px; }
`;
const DeleteButton = styled.button`
  display: grid;
  place-items: center;
  background: ${C.accent};
  color: ${C.ink};
`;
const SideTools = styled.div`
  display: flex;
  flex-direction: column;
  justify-content: space-between;
  align-items: flex-end;
  padding: 4px 8px 3px 0;
`;
const SizeGroup = styled.div`
  display: flex;
  border: 1px solid ${C.accent};
  border-radius: 4px;
  overflow: hidden;
`;
const SizeButton = styled.button`
  width: ${(p) => (p["aria-pressed"] ? 35 : 34)}px;
  height: 29px;
  background: ${(p) => (p["aria-pressed"] ? C.pale : "#222")};
  color: ${(p) => (p["aria-pressed"] ? "#22364a" : "#c2d6e6")};
  font-size: ${(p) => p.$size}px;
  font-weight: 700;
`;
const ResetButton = styled.button`
  display: flex;
  align-items: center;
  gap: 23px;
  width: 99px;
  height: 23px;
  margin-right: 3px;
  padding-left: 4px;
  border: 1px solid ${C.accent};
  border-radius: 4px;
  background: ${C.panel};
`;

const TrashIcon = () => (
  <svg width="12" height="16" viewBox="0 0 12 16" aria-hidden="true">
    <path d="M0 2.500H12M4 2V.8H8V2" fill="none" stroke="currentColor" strokeWidth="1.500" />
    <path d="M1 4.500H11L10 15.500H2Z" fill="currentColor" />
    <path d="M4 6.500V13.500M6 6.500V13.500M8 6.500V13.500" stroke={C.accent} strokeWidth=".8" />
  </svg>
);

function MeasureIcon({ kind }) {
  const bars = [[4, 1], [13.5, 6], [23, 11], [32.500, 15], [42, 18]];
  const busy = kind === "SINAD";
  const dense = kind === "SNR";
  return (
    <svg width="51" height="26" aria-hidden="true">
      {dense && <rect width="50" height="14" y="1" fill="#eaf4fc" />}
      {dense && <path d="M0 15H50" stroke="#000" />}
      <g stroke={busy ? "#e08a9a" : "#8ba3b8"} strokeWidth="1.200">
        <path d="M0 24H51" strokeWidth="1.500" />
        {dense
          ? Array.from({ length: 10 }, (_, i) => <path key={i} d={`M${3 + i * 4.8} 16V24`} />)
          : bars.map(([x, y]) => <path key={x} d={`M${x + 0.5} ${y}V24`} />)}
        {busy && bars.map(([x]) => <path key={`s${x}`} d={`M${x + 5} 19V24`} />)}
      </g>
      {kind === "Amplitude at Peak" && <path d="M0 .8H51" stroke="#d8232f" strokeWidth="1.200" />}
      {kind === "Frequency at Peak" && <path d="M4 2V24M10 5V13" stroke="#c02b38" />}
      {dense && <path d="M12.500 2V14M11 4L12.500 2L14 4M11 12L12.500 14L14 12" fill="none" stroke="#d8232f" />}
      {dense && <text x="48" y="10" textAnchor="end" fontFamily={UI} fontSize="9" fill="#d8232f">SNR</text>}
      {busy && <text x="49" y="10" textAnchor="end" fontFamily={UI} fontSize="9" fill="#a81f2b">SINAD</text>}
    </svg>
  );
}

const STATS = [["Min.", "--.--"], ["Max.", "--.--"], ["x̄", "--.--"], ["σ", "--.--"], ["n", "0"]];

function Measurement({ name }) {
  return (
    <Card>
      <CardName>
        <MeasureIcon kind={name} />
        <CardLabel>{name}</CardLabel>
      </CardName>
      <Reading><Source>A</Source><Output>--.--</Output></Reading>
      <GearButton aria-label={`${name} settings`}><MdSettings size={20} /></GearButton>
      <Stats>
        {STATS.map(([k, v]) => <React.Fragment key={k}><dt>{k}</dt><dd>{v}</dd></React.Fragment>)}
      </Stats>
      <DeleteButton aria-label={`Delete ${name}`}><TrashIcon /></DeleteButton>
    </Card>
  );
}

const TRACE_A = tracePath(BAND_A, SPIKES_A, 10, 42);
const TRACE_B = tracePath(BAND_B, SPIKES_B, 10, 77);

export default function App() {
  return (
    <Window>
      <Global />
      <Pointer width="12" height="19" viewBox="0 0 12 19" aria-hidden="true">
        <path d="M.5 .5V15L4 12L6.500 18L9 17L6.500 11H11.500Z" fill="#fff" stroke="#222" strokeWidth=".8" />
      </Pointer>
      <TitleBar>
        <svg width="16" height="16" aria-hidden="true">
          <rect width="16" height="16" fill="#fff" />
          <text x="8" y="8" textAnchor="middle" fontFamily={NUM} fontSize="10" fill="#1976b8">PS</text>
          <path d="M1 13C4 8 5 9 8 13S12 14 15 9" fill="none" stroke="#222" strokeWidth="1.200" />
        </svg>
        <Caption>PicoScope 7 T&amp;M</Caption>
        <FrameButtons>
          <FrameButton aria-label="Minimise"><Line width="10" height="10"><path d="M0 5.500H10" /></Line></FrameButton>
          <FrameButton aria-label="Restore">
            <Line width="11" height="11"><rect x=".5" y="2.500" width="7.500" height="7.500" rx="1" /><path d="M3 .5H8.500Q10.500 .5 10.500 2.500V8" /></Line>
          </FrameButton>
          <FrameButton aria-label="Close"><Cross size={10} width={1} /></FrameButton>
        </FrameButtons>
      </TitleBar>
      <Body>
        <Sidebar>
          <Channels>
            <RunButton>Stopped</RunButton>
            <Channel id="A" color={C.blue} />
            <Channel id="B" color="#e8203f" />
            <Generator>
              <Step name="Generator" h={25}><GenLabel>Gen</GenLabel></Step>
              <Step name="Generator output" h={25}><GenLabel>Off</GenLabel></Step>
            </Generator>
          </Channels>
          <Rule />
          <ToolGrid>
            {TOOLS.map(([label, icon, off]) => <ToolItem key={label} label={label} icon={icon} disabled={off} />)}
          </ToolGrid>
          <Rule $foot />
        </Sidebar>
        <Main>
          <Toolbar>
            <Step name="Spectrum range" w="175px">
              <Pair>
                <Lead $tight><span>Spectrum</span><Value $size={14}>2 MHz</Value></Lead>
                <Details><span>Bins</span><b>1048576</b><span>Sample rate</span><span>3.91 MS/s</span></Details>
              </Pair>
            </Step>
            <Step name="Trigger level" w="165px">
              <Pair>
                <Lead><span>Trigger</span><Value $size={14}>0 V</Value></Lead>
                <Details>
                  <Edge>Ext<Line width="8" height="9" stroke={C.text}><path d="M0 8.500H4V.5H8" /></Line></Edge>
                  <span>50 %</span><span>Simple edge</span><span>Auto</span>
                </Details>
              </Pair>
            </Step>
            <Step name="Waveform" w="120px" plusOff>
              <Stack><span>Waveform</span><Value $size={14}>54</Value><Small>of 54</Small></Stack>
            </Step>
            <Step name="Hardware resolution" w="120px" plusOff>
              <Stack><span>Hardware</span><span>resolution</span><Value $size={12}>15 bits</Value></Stack>
            </Step>
            <ToolRow>
              <ToolItem bar label="Instruments" icon={<InstrumentsIcon />} />
              <ToolItem bar label="Auto setup" icon={<WandIcon />} />
              <ToolItem bar label="Open" icon={<FaFolderOpen size={27} />} />
              <ToolItem bar label="Save" icon={<MdSave size={29} />} />
              <ToolItem bar label="Print" icon={<MdPrint size={29} />} />
              <ToolItem bar label="Full" icon={<FullIcon />} />
            </ToolRow>
            <Logo />
          </Toolbar>
          <Plots>
            <Spectrum
              name="Spectrum 1"
              color={C.blue}
              axisColor="#3a86c8"
              ticks={["-93.64", "-99.44", "-105.2", "-111.0", "-116.8", "-122.6", "", "-134.2", "-140.0", "-145.8", "-151.6"]}
              hRulers={[[163, "-120.4"], [211, "-128.3"]]}
              vRulers={[[67, "48.01 kHz"], [180, "112.6 kHz"]]}
              x0={157.5}
              pitch={174.2}
              path={TRACE_A}
            >
              <RulersPanel
                top={22} right={316} color={C.blue} inverse="15.48 µs"
                freq={["48.01 kHz", "112.6 kHz", "64.62 kHz"]}
                level={["-128.3 dBu", "-120.4 dBu", "7.922 dBu"]}
              />
              <ZoomPanel top={22} right={14} factor="x3.4" box={[55, 27]} path={MINI_A} color={C.blue} level={15} />
            </Spectrum>
            <Spectrum
              name="Spectrum 2"
              active
              color={C.red}
              axisColor="#d9213f"
              ticks={["-96.4", "-101.3", "-106.1", "-111.0", "-115.8", "", "-125.6", "-130.4", "-135.3", "-140.1", "-145.0"]}
              hRulers={[[176, "-120.6"], [270, "-133.5"]]}
              vRulers={[[72, "50.3 kHz"], [232, "141.6 kHz"]]}
              x0={159.5}
              pitch={175.7}
              firstLabel
              path={TRACE_B}
            >
              <RulersPanel
                top={22} right={317} color={C.red} inverse="10.95 µs"
                freq={["50.3 kHz", "141.6 kHz", "91.3 kHz"]}
                level={["-133.5 dBu", "-120.6 dBu", "12.95 dBu"]}
              />
              <ZoomPanel top={22} right={18} factor="x1.2" box={[11, 74]} path={MINI_B} color={C.red} level={5} />
            </Spectrum>
          </Plots>
          <Measurements>
            <TabSlot><Tab name="Measurements" flow /></TabSlot>
            <Cards>
              {["Amplitude at Peak", "Frequency at Peak", "SNR", "Total power", "SINAD"].map((n) => <Measurement key={n} name={n} />)}
            </Cards>
            <SideTools>
              <SizeGroup>
                <SizeButton aria-pressed={false} $size={12}>S</SizeButton>
                <SizeButton aria-pressed={true} $size={15}>M</SizeButton>
                <SizeButton aria-pressed={false} $size={20}>L</SizeButton>
              </SizeGroup>
              <ResetButton><MdHistory size={19} color={C.pale} />Reset</ResetButton>
            </SideTools>
          </Measurements>
        </Main>
      </Body>
    </Window>
  );
}
